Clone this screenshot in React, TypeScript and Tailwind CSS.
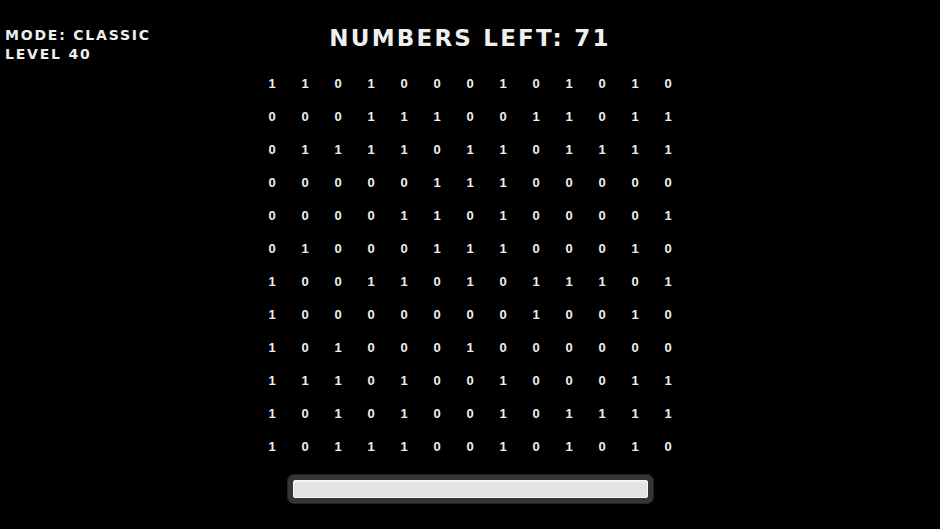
import React from "react";

const BOARD: string[] = [
  "1101000101010",
  "0001110011011",
  "0111101101111",
  "0000011100000",
  "0000110100001",
  "0100011100010",
  "1001101011101",
  "1000000010010",
  "1010001000000",
  "1110100100011",
  "1010100101111",
  "1011100101010",
];

const pixelFont = { fontFamily: '"DejaVu Sans", "Liberation Sans", sans-serif' };

export default function App() {
  return (
    <div
      className="w-[940px] h-[529px] bg-black text-[#efefef] overflow-hidden flex flex-col"
      style={pixelFont}
    >
      {/* HUD row: mode/level on the left, counter centred */}
      <div className="grid grid-cols-[1fr_auto_1fr] pt-[24px]">
        <div className="pl-[5px] pt-[2px] text-[14px] leading-[19px] font-bold tracking-[1.8px] uppercase">
          <div>Mode: Classic</div>
          <div>Level 40</div>
        </div>
        <div className="text-[23px] leading-[28px] font-bold tracking-[2.2px] uppercase">
          Numbers Left: 71
        </div>
        <div />
      </div>

      {/* binary board */}
      <div className="mx-auto mt-[3px] grid grid-cols-[repeat(13,33px)] auto-rows-[33px]">
        {BOARD.flatMap((row, r) =>
          row.split("").map((d, c) => (
            <div
              key={`${r}-${c}`}
              className="flex items-center justify-center text-[13px] font-bold"
              style={{ fontFamily: '"Liberation Sans", sans-serif' }}
            >
              {d}
            </div>
          ))
        )}
      </div>

      {/* timer bar */}
      <div className="mx-auto mt-[11px] w-[367px] h-[30px] rounded-[7px] bg-[#353535] border border-[#242424] p-[5px]">
        <div className="h-full w-full rounded-[2px] bg-[#e3e3e3] border border-[#f8f8f8] shadow-[inset_0_2px_0_#ececec]" />
      </div>
    </div>
  );
}
